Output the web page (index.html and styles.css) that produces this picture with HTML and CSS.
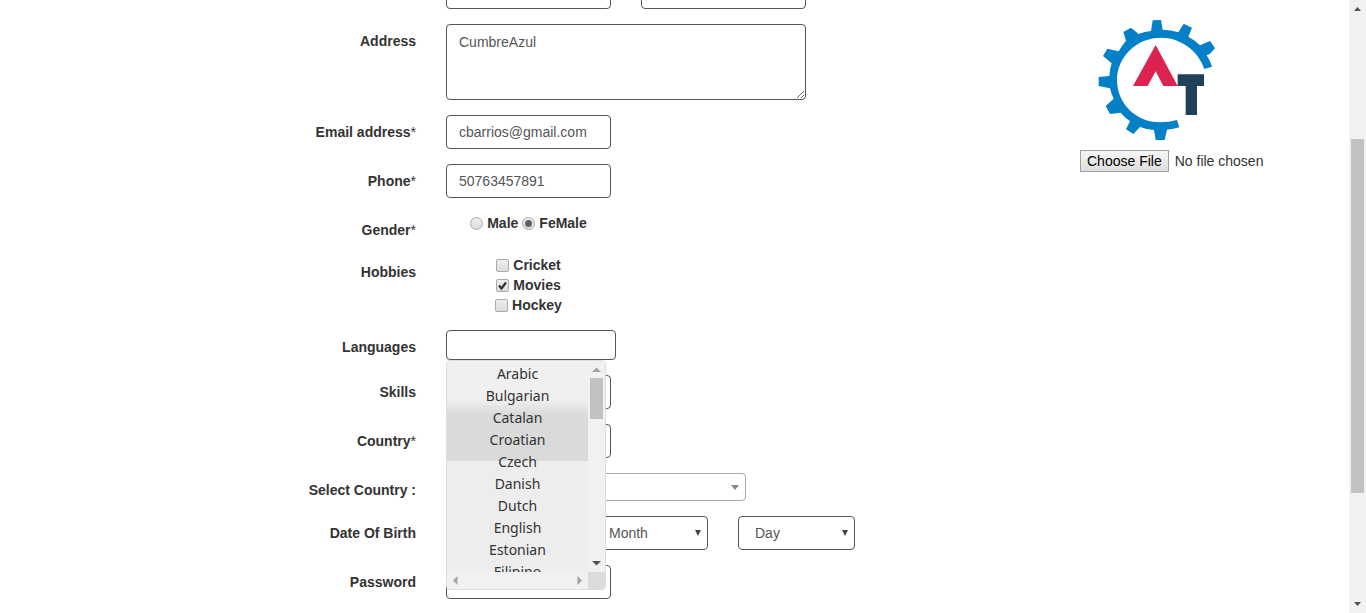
FILE: index.html
```html
<!DOCTYPE html>
<html lang="en">
<head>
<meta charset="utf-8">
<meta name="viewport" content="width=device-width, initial-scale=1">
<title>Register</title>
<link rel="stylesheet" href="styles.css">
</head>
<body>
<div class="viewport">
  <main class="page">
    <form class="form">
      <div class="row">
        <span class="label"></span>
        <div class="fields pair">
          <input class="control" type="text" aria-label="First name">
          <input class="control" type="text" aria-label="Last name">
        </div>
      </div>
      <div class="row">
        <label class="label" for="address">Address</label>
        <div class="fields"><textarea class="control area" id="address">CumbreAzul</textarea></div>
      </div>
      <div class="row">
        <label class="label" for="email">Email address<span class="star">*</span></label>
        <div class="fields"><input class="control" id="email" type="email" value="cbarrios@gmail.com"></div>
      </div>
      <div class="row">
        <label class="label" for="phone">Phone<span class="star">*</span></label>
        <div class="fields"><input class="control" id="phone" type="tel" value="50763457891"></div>
      </div>
      <div class="row">
        <span class="label">Gender<span class="star">*</span></span>
        <div class="fields choices">
          <label class="choice"><input type="radio" name="gender">Male</label>
          <label class="choice"><input type="radio" name="gender" checked>FeMale</label>
        </div>
      </div>
      <div class="row">
        <span class="label">Hobbies</span>
        <div class="fields choices stacked">
          <label class="choice"><input type="checkbox">Cricket</label>
          <label class="choice"><input type="checkbox" checked>Movies</label>
          <label class="choice"><input type="checkbox">Hockey</label>
        </div>
      </div>
      <div class="row">
        <label class="label" for="languages">Languages</label>
        <div class="fields picker">
          <input class="control multi" id="languages" type="text">
          <div class="menu">
            <ul class="options">
              <li>Arabic</li>
              <li>Bulgarian</li>
              <li>Catalan</li>
              <li>Croatian</li>
              <li>Czech</li>
              <li>Danish</li>
              <li>Dutch</li>
              <li>English</li>
              <li>Estonian</li>
              <li>Filipino</li>
            </ul>
            <div class="bar bar-side">
              <svg class="arrow faint" viewBox="0 0 17 17"><path d="M4 11h9L8.500 6.500z"/></svg>
              <span class="thumb"></span>
              <span class="track"></span>
              <svg class="arrow" viewBox="0 0 17 17"><path d="M4 6h9L8.500 10.500z"/></svg>
            </div>
            <div class="bar bar-foot">
              <svg class="arrow faint" viewBox="0 0 17 17"><path d="M10.500 4v9L6 8.500z"/></svg>
              <svg class="arrow faint" viewBox="0 0 17 17"><path d="M6.500 4v9L11 8.500z"/></svg>
            </div>
            <span class="corner"></span>
          </div>
        </div>
      </div>
      <div class="row">
        <label class="label" for="skills">Skills</label>
        <div class="fields"><select class="control" id="skills"><option></option></select></div>
      </div>
      <div class="row">
        <label class="label" for="country">Country<span class="star">*</span></label>
        <div class="fields"><select class="control" id="country"><option></option></select></div>
      </div>
      <div class="row">
        <label class="label" for="pick-country">Select Country :</label>
        <div class="fields"><select class="control combo" id="pick-country"><option></option></select></div>
      </div>
      <div class="row">
        <label class="label" for="year">Date Of Birth</label>
        <div class="fields pair">
          <select class="control date" id="year"><option></option></select>
          <select class="control date" aria-label="Month"><option>Month</option></select>
          <select class="control date" aria-label="Day"><option>Day</option></select>
        </div>
      </div>
      <div class="row">
        <label class="label" for="password">Password</label>
        <div class="fields"><input class="control" id="password" type="password"></div>
      </div>
    </form>
    <aside class="upload">
      <svg class="logo" viewBox="9 12 354 360" role="img" aria-label="Gear logo">
        <path fill="#0480c6" d="M351 152Q345 133 335 118L345 113L360 97L345 75L315 88Q299 72 280 62L291 35L266 23L250 49Q228 41 203 41L198 12L173 13L168 45Q149 46 131 54L108 35L85 48L93 74Q81 88 71 106L37 98L24 120L50 142Q44 160 43 180L11 183V210L45 217Q48 232 56 248L32 270L45 294L77 290Q89 305 105 316L93 340L115 354L135 333Q155 341 177 342L182 372H209L216 341Q235 340 253 334L246 312Q222 319 195 319C123 319 66 262 66 192C66 122 125 65 198 65C258 65 310 105 328 159z"/>
        <path fill="#dc234f" d="M182 87L248 210H205L182 166L158 210H114z"/>
        <path fill="#20415a" d="M248 175h79v35h-21v87h-34v-87h-24z"/>
      </svg>
      <input class="file" type="file" aria-label="Photo">
    </aside>
  </main>
  <div class="bar page-bar">
    <svg class="arrow" viewBox="0 0 17 17"><path d="M5 11h7L8.500 7z"/></svg>
    <span class="before"></span>
    <span class="thumb"></span>
    <span class="after"></span>
    <svg class="arrow" viewBox="0 0 17 17"><path d="M5 6h7L8.500 10z"/></svg>
  </div>
</div>
</body>
</html>
```
FILE: styles.css
```css
* {
  box-sizing: border-box;
}

body {
  margin: 0;
  background: #fff;
  color: #333;
  font: 14px/20px "Liberation Sans", Arial, sans-serif;
}

.viewport {
  display: flex;
  height: 100vh;
  overflow: hidden;
}

.page {
  display: grid;
  grid-template-columns: minmax(0, 1fr) 194px;
  flex: 1;
  align-items: start;
  max-width: 1199px;
  margin: -25px auto 0;
}

.form {
  display: flex;
  flex-direction: column;
  gap: 15px;
}

.row {
  display: grid;
  grid-template-columns: 341px minmax(0, 1fr);
  column-gap: 30px;
  align-items: start;
}

.label {
  padding-top: 7px;
  font-weight: 700;
  text-align: right;
}

.star {
  font-weight: 400;
}

.fields {
  display: flex;
}

.pair {
  gap: 30px;
}

.control {
  width: 165px;
  height: 34px;
  margin: 0;
  padding: 6px 12px;
  border: 1px solid #555;
  border-radius: 4px;
  background: #fff;
  color: #555;
  font: inherit;
}

select.control {
  appearance: none;
  background: #fff url("data:image/svg+xml,%3Csvg xmlns='http://www.w3.org/2000/svg' width='6' height='7'%3E%3Cpath d='M0 0h6L3 6z' fill='%23444'/%3E%3C/svg%3E") no-repeat right 6px center;
}

select.date {
  width: 116px;
  padding: 6px 16px;
}

select.date:last-child {
  width: 117px;
}

select.combo {
  width: 300px;
  height: 28px;
  border-color: #aaa;
  background-image: url("data:image/svg+xml,%3Csvg xmlns='http://www.w3.org/2000/svg' width='8' height='5'%3E%3Cpath d='M0 0h8L4 5z' fill='%23888'/%3E%3C/svg%3E");
}

.area {
  width: 360px;
  height: 76px;
  padding-top: 7px;
}

.choices {
  justify-content: center;
  gap: 4px;
  width: 165px;
}

.stacked {
  flex-direction: column;
  align-items: center;
  gap: 0;
}

.choice {
  display: flex;
  align-items: center;
  gap: 4px;
  font-weight: 700;
}

.choice input {
  appearance: none;
  display: grid;
  place-items: center;
  width: 13px;
  height: 13px;
  margin: 0;
  border: 1px solid #aaa;
  border-radius: 2px;
  background: linear-gradient(#eee, #dcdcdc);
}

.choice input[type="radio"] {
  border-radius: 50%;
}

.choice input[type="radio"]:checked::before {
  content: "";
  width: 7px;
  height: 7px;
  border-radius: 50%;
  background: #606060;
}

.choice input[type="checkbox"]:checked {
  background: url("data:image/svg+xml,%3Csvg xmlns='http://www.w3.org/2000/svg' width='11' height='11'%3E%3Cpath d='M2 5.500l2.500 3L9 2.500' fill='none' stroke='%23333' stroke-width='2.200'/%3E%3C/svg%3E") center no-repeat, linear-gradient(#eee, #dcdcdc);
}

.picker {
  position: relative;
}

.multi {
  width: 170px;
  height: 30px;
}

.row:has(.picker) {
  position: relative;
  z-index: 1;
}

.menu {
  position: absolute;
  top: 100%;
  left: 0;
  display: grid;
  grid-template: 211px 17px / 1fr 17px;
  width: 160px;
  overflow: hidden;
  border: 1px solid #ddd;
  border-radius: 4px;
  background: #f1f1f1;
}

.options {
  margin: 0;
  padding: 2px 0 0;
  overflow: hidden;
  list-style: none;
  background: linear-gradient(#f0f0f0 38px, #dadada 54px, #dadada 100px, #ededed 100px);
  font: 14px/22px "Noto Sans", sans-serif;
  text-align: center;
}

.bar {
  display: flex;
  justify-content: space-between;
  background: #f1f1f1;
}

.bar-side,
.page-bar {
  flex-direction: column;
}

.page-bar {
  flex: none;
  width: 17px;
}

.arrow {
  flex: none;
  width: 17px;
  height: 17px;
  fill: #505050;
}

.faint {
  fill: #a3a3a3;
}

.thumb {
  flex: 41;
  margin: 0 2px;
  background: #c1c1c1;
}

.track {
  flex: 136;
}

.before {
  flex: 122;
}

.page-bar .thumb {
  flex: 354;
}

.after {
  flex: 103;
}

.corner {
  background: #dcdcdc;
}

.upload {
  padding-top: 45px;
}

.logo {
  display: block;
  width: 118px;
  height: 120px;
  margin: 0 0 10px 18px;
}

.file {
  display: block;
  width: 100%;
  height: 22px;
  color: #333;
  font: inherit;
}

.file::file-selector-button {
  height: 22px;
  margin: 0 6px 0 0;
  padding: 0 6px;
  border: 1px solid #a0a0a0;
  border-radius: 0;
  background: linear-gradient(#f6f6f6, #dedede);
  color: #000;
  font: inherit;
}
```
